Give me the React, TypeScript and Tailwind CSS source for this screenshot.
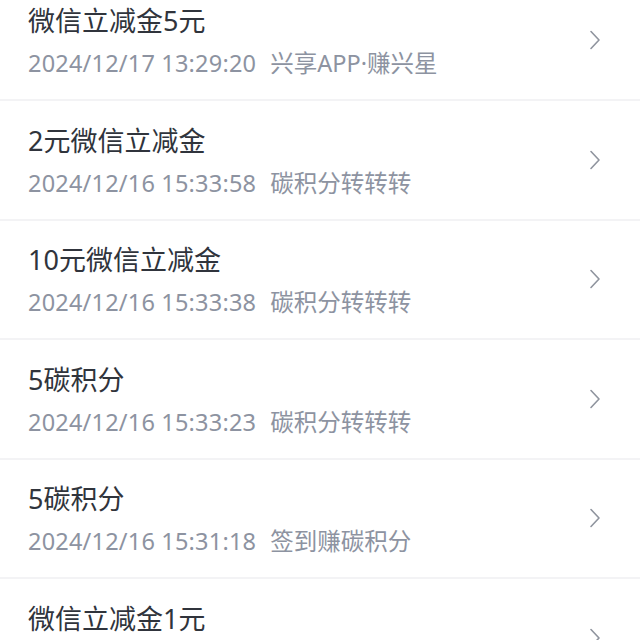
import React from 'react';

interface RecordItem {
  title: string;
  time: string;
  source: string;
}

const records: RecordItem[] = [
  { title: '微信立减金5元', time: '2024/12/17 13:29:20', source: '兴享APP·赚兴星' },
  { title: '2元微信立减金', time: '2024/12/16 15:33:58', source: '碳积分转转转' },
  { title: '10元微信立减金', time: '2024/12/16 15:33:38', source: '碳积分转转转' },
  { title: '5碳积分', time: '2024/12/16 15:33:23', source: '碳积分转转转' },
  { title: '5碳积分', time: '2024/12/16 15:31:18', source: '签到赚碳积分' },
  { title: '微信立减金1元', time: '2024/12/16 15:30:02', source: '碳积分转转转' },
];

const Chevron = () => (
  <svg width="12" height="20" viewBox="0 0 12 20" fill="none" className="shrink-0">
    <path d="M2 1.5 L10 10 L2 18.5" stroke="#8f949e" strokeWidth="1.6" strokeLinecap="round" strokeLinejoin="round" />
  </svg>
);

const App: React.FC = () => {
  return (
    <div
      className="w-[640px] h-[640px] overflow-hidden bg-white"
      style={{ fontFamily: '"Noto Sans", "Noto Sans CJK SC", sans-serif' }}
    >
      {/* 记录列表 */}
      <div className="-mt-[18.5px]">
        {records.map((item, i) => (
          <div
            key={i}
            className="h-[119.5px] flex items-center justify-between pl-[28px] pr-[39px] border-b-2 border-[#f3f3f5]"
          >
            <div className="flex flex-col gap-[6px] pt-[4px]">
              <div className="text-[27px] leading-[36px] text-[#30343c]">{item.title}</div>
              <div className="text-[23.5px] leading-[36px] text-[#8d93a1] whitespace-nowrap">
                <span className="tracking-[0.2px]">{item.time}</span>
                <span className="ml-[14px]">{item.source}</span>
              </div>
            </div>
            <Chevron />
          </div>
        ))}
      </div>
    </div>
  );
};

export default App;
